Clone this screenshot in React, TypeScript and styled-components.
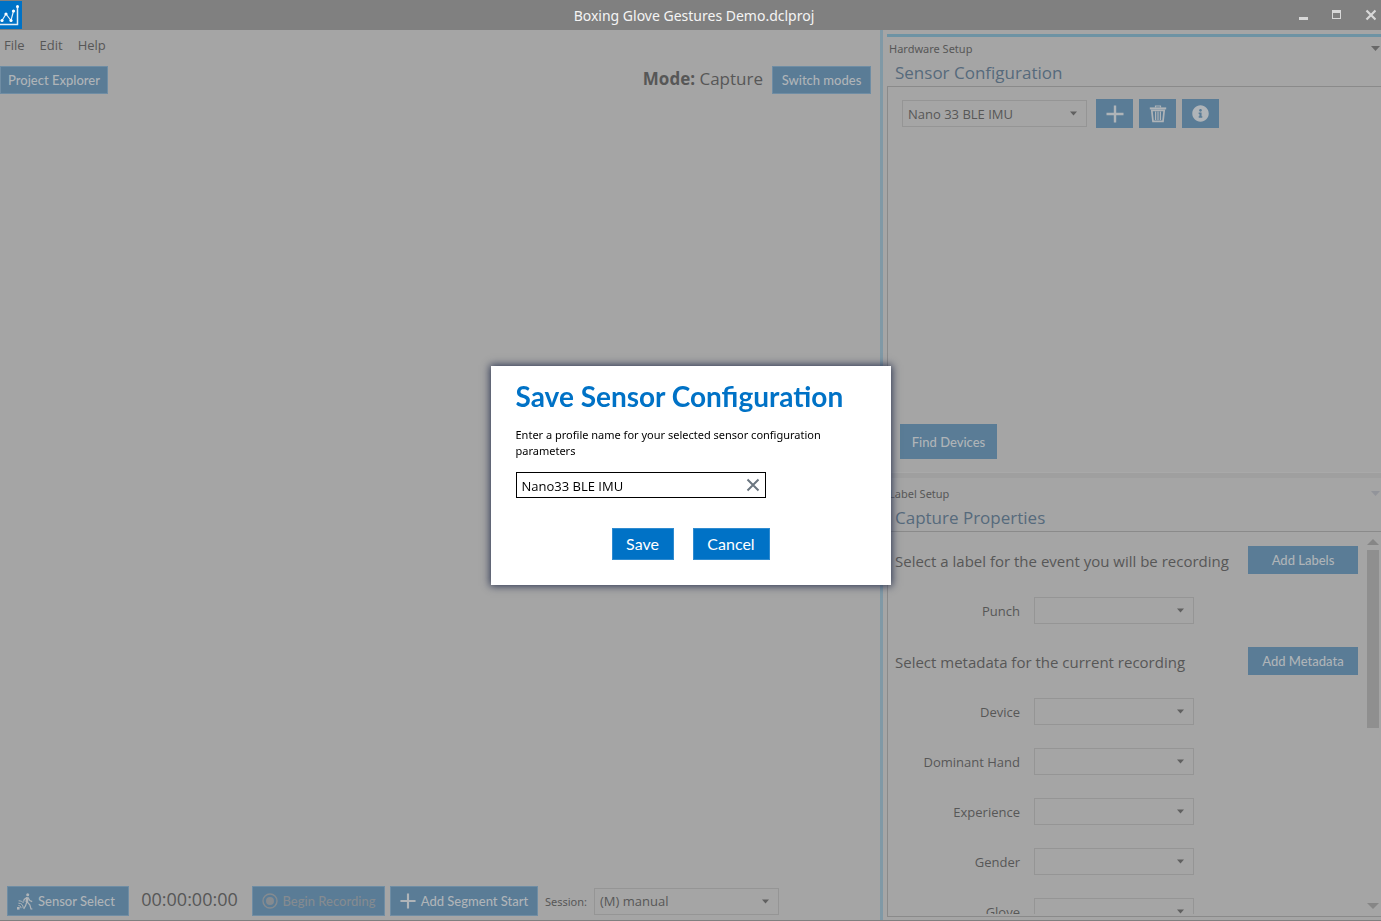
import React, { useState } from "react";
import styled, { createGlobalStyle, css } from "styled-components";
import { FaInfoCircle } from "react-icons/fa";

const color = {
  page: "#a5a5a5",
  titleBar: "#808080",
  button: "#5a7c96",
  buttonEdge: "#6f8da4",
  buttonText: "#afb4b8",
  text: "#575757",
  heading: "#566a7c",
  line: "#8a8a8a",
  field: "#959595",
  accent: "#0072c6",
};

const ui = `"Open Sans", "Noto Sans", sans-serif`;
const wide = `"Noto Sans", "Open Sans", sans-serif`;
const label = `Lato, "Open Sans", sans-serif`;

const GlobalStyle = createGlobalStyle`
  *, *::before, *::after { box-sizing: border-box; }
  body { margin: 0; background: ${color.page}; color: ${color.text}; font-family: ${ui}; font-size: 13px; }
  button, input, select { font: inherit; color: inherit; margin: 0; }
  h1, h2, h3, p { margin: 0; font-weight: 400; }
  svg { flex: none; }
`;

const Window = styled.div`
  display: flex;
  flex-direction: column;
  height: 100vh;
  min-height: 640px;
  overflow: hidden;
  border-bottom: 1px solid #7f7f7f;
`;

const TitleBar = styled.header`
  display: grid;
  grid-template-columns: 1fr auto 1fr;
  align-items: center;
  flex: none;
  height: 30px;
  padding-right: 5px;
  background: ${color.titleBar};
`;

const Logo = styled.svg`
  display: block;
`;

const WindowTitle = styled.h1`
  padding: 2px 0 0 12px;
  font-family: ${wide};
  font-size: 14px;
  line-height: 20px;
  color: #f4f4f4;
`;

const WindowControls = styled.div`
  display: flex;
  justify-content: flex-end;
  gap: 20px;
`;

const IconButton = styled.button`
  display: flex;
  align-items: center;
  justify-content: center;
  flex: none;
  padding: 0;
  border: 0;
  background: none;
`;

const Workspace = styled.div`
  display: grid;
  grid-template-columns: minmax(0, 1fr) 3px 498px;
  flex: 1;
  min-height: 0;
`;

const Main = styled.main`
  display: flex;
  flex-direction: column;
  min-width: 0;
`;

const Splitter = styled.div`
  background: #8099a6;
`;

const MenuBar = styled.nav`
  display: flex;
  gap: 15px;
  padding: 5px 4px;
`;

const MenuItem = styled.a`
  font-size: 13px;
  line-height: 20px;
  color: inherit;
  text-decoration: none;
`;

const Toolbar = styled.div`
  display: flex;
  align-items: center;
  gap: 9px;
  padding: 6px 9px 0 0;
`;

const ModeText = styled.div`
  margin-left: auto;
  padding-bottom: 2px;
  font-size: 17px;
  line-height: 24px;
`;

const Button = styled.button<{ $height?: number; $width?: number }>`
  display: inline-flex;
  align-items: center;
  justify-content: center;
  flex: none;
  gap: 5px;
  height: ${(p) => p.$height ?? 28}px;
  ${(p) => p.$width && css`width: ${p.$width}px;`}
  padding: 0 4px;
  border: 1px solid ${color.buttonEdge};
  background: ${color.button};
  color: ${color.buttonText};
  font-family: ${label};
  font-size: 13px;
  font-weight: 500;
  white-space: nowrap;

  &:disabled { color: #858b90; }
`;

const SensorButton = styled(Button)`
  justify-content: flex-start;
  gap: 4px;
  padding-left: 9px;
`;

const FlatButton = styled(Button)`
  border-color: ${color.button};
`;

const SquareButton = styled(FlatButton)`
  padding: 0;
`;

const RecordBar = styled.div`
  display: flex;
  align-items: center;
  margin-top: auto;
  padding: 0 0 4px 7px;
`;

const RecordActions = styled.div`
  display: flex;
  gap: 5px;
`;

const Timer = styled.output`
  width: 123px;
  padding: 0 2px 4px 0;
  text-align: center;
  font-size: 18px;
  line-height: 24px;
`;

const SessionLabel = styled.label`
  padding: 0 7px;
  font-family: ${wide};
  font-size: 11px;
`;

const SelectBox = styled.span<{ $width: number }>`
  position: relative;
  display: block;
  flex: none;
  width: ${(p) => p.$width}px;
  height: 27px;
`;

const NativeSelect = styled.select`
  appearance: none;
  display: block;
  width: 100%;
  height: 100%;
  padding: 0 24px 0 5px;
  border: 1px solid ${color.field};
  border-radius: 0;
  background: transparent;
`;

const Caret = styled.svg`
  position: absolute;
  top: 11px;
  right: 10px;
  pointer-events: none;
`;

const Side = styled.aside`
  display: grid;
  grid-template-rows: minmax(0, 1fr) 6px minmax(0, 1fr);
  min-width: 0;
  min-height: 0;
  padding-left: 4px;
`;

const Panel = styled.section<{ $active?: boolean }>`
  display: flex;
  flex-direction: column;
  min-height: 0;
  padding-top: 4px;

  &::before {
    content: "";
    display: ${(p) => (p.$active ? "block" : "none")};
    flex: none;
    height: 3px;
    background: #6d93a4;
  }
`;

const PanelDivider = styled.div`
  border-top: 1px solid #a9a9a9;
  background: #9f9f9f;
`;

const PanelHeader = styled.header`
  display: flex;
  align-items: center;
  justify-content: space-between;
  flex: none;
  height: 24px;
  padding: 0 1px 1px 2px;
  font-family: ${wide};
  font-size: 11px;
`;

const PanelTitle = styled.h2`
  flex: none;
  height: 25px;
  padding-left: 8px;
  font-size: 17px;
  line-height: 24px;
  color: ${color.heading};
`;

const PanelBox = styled.div`
  display: flex;
  flex: 1;
  min-height: 0;
  border-top: 1px solid ${color.line};
  border-left: 1px solid ${color.line};
`;

const DevicesBox = styled(PanelBox)`
  flex-direction: column;
  align-items: flex-start;
  justify-content: space-between;
  padding: 12px 12px 13px;
`;

const ConfigRow = styled.div`
  display: flex;
  align-items: center;
  gap: 6px;
  padding-left: 2px;

  > :first-child { margin-right: 3px; }
`;

const PropertiesBox = styled(PanelBox)`
  border-bottom: 1px solid ${color.line};
  margin-bottom: 3px;
  padding-bottom: 2px;
`;

const Properties = styled.div`
  flex: 1;
  min-width: 0;
  overflow: hidden;
  padding: 14px 9px 0 7px;
`;

const Group = styled.section`
  margin-bottom: 12px;
`;

const GroupHeader = styled.div`
  display: flex;
  align-items: center;
  justify-content: space-between;
  height: 28px;
  margin-bottom: 11px;
`;

const GroupTitle = styled.h3`
  padding-top: 2px;
  font-size: 15px;
  line-height: 20px;
  white-space: nowrap;
`;

const Field = styled.div`
  display: grid;
  grid-template-columns: 125px 160px;
  column-gap: 14px;
  height: 50px;
  padding-top: 12px;
  line-height: 28px;
  text-align: right;
`;

const ScrollTrack = styled.div`
  display: flex;
  flex-direction: column;
  align-items: center;
  flex: none;
  width: 12px;
  margin-right: 2px;
  padding: 7px 0 5px;
`;

const ScrollThumb = styled.div`
  width: 100%;
  height: 48%;
  margin: 5px 0 auto;
  background: #8f8f8f;
`;

const DialogLayer = styled.div`
  position: fixed;
  inset: 30px 0 0 0;
  display: flex;
  align-items: center;
  justify-content: center;
`;

const Dialog = styled.form`
  width: 400px;
  padding: 13px 25px 25px;
  background: #fff;
  color: #000;
  box-shadow: 0 0 8px 1px #2b3450;
`;

const DialogTitle = styled.h2`
  font-family: ${label};
  font-size: 28px;
  font-weight: 700;
  line-height: 34px;
  white-space: nowrap;
  color: ${color.accent};
`;

const DialogText = styled.label`
  display: block;
  margin: 14px 0 13px;
  font-family: ${wide};
  font-size: 11px;
  line-height: 16px;
`;

const NameField = styled.div`
  display: flex;
  align-items: center;
  width: 250px;
  height: 26px;
  padding-right: 5px;
  border: 1px solid #000;
`;

const NameInput = styled.input`
  flex: 1;
  min-width: 0;
  padding: 1px 5px 0;
  border: 0;
  outline: 0;
  background: none;
  font-size: 13px;
`;

const DialogActions = styled.div`
  display: flex;
  justify-content: center;
  gap: 19px;
  margin-top: 30px;
`;

const PrimaryButton = styled.button<{ $width: number }>`
  width: ${(p) => p.$width}px;
  height: 32px;
  padding: 0 0 2px;
  border: 1px solid #2f8bd0;
  background: ${color.accent};
  color: #fff;
  font-family: ${label};
  font-size: 16px;
`;

const Triangle = ({ up, w = 12, h = 6, fill = "#868686" }: { up?: boolean; w?: number; h?: number; fill?: string }) => (
  <svg width={w} height={h} viewBox="0 0 12 6" preserveAspectRatio="none" aria-hidden="true">
    <path d={up ? "M0 6 6 0l6 6z" : "M0 0h12L6 6z"} fill={fill} />
  </svg>
);

const PlusIcon = ({ thin }: { thin?: boolean }) => (
  <svg width={thin ? 16 : 18} height={thin ? 16 : 18} viewBox="0 0 18 18" aria-hidden="true">
    <path d="M9 .5v17M.5 9h17" stroke="currentColor" strokeWidth="2.4" />
  </svg>
);

const TrashIcon = () => (
  <svg width="18" height="18" viewBox="0 0 18 18" fill="none" stroke="currentColor" aria-hidden="true">
    <path d="M6.5 2.5V1h5v1.5" strokeWidth="1.2" />
    <path d="M.8 3.4h16.4" strokeWidth="2" />
    <path d="M2.8 5.4 4 16.4h10l1.2-11z" strokeWidth="1.7" />
    <path d="M6.6 6.5v8.5M9 6.5v8.5M11.4 6.5v8.5" strokeWidth="1.2" />
  </svg>
);

const WalkIcon = () => (
  <svg width="17" height="17" viewBox="0 0 17 17" fill="none" stroke="currentColor" aria-hidden="true">
    <circle cx="10.7" cy="1.8" r="1.5" fill="currentColor" stroke="none" />
    <path d="M10.4 4.2 9.8 9.2" strokeWidth="2.6" />
    <path d="M9.8 4.6 7.2 6.4 6.6 8.6M11.2 4.8l1.6 2.8 2.4 1M9.7 9l-1 3.4-2 3.6M10.2 9l2.6 2.8 1.2 4.2h1.4" strokeWidth="1.2" />
    <path d="M1.4 12.6c1.8 0 2.6.9 2.6 2.6M1.4 10.2c3.2 0 4.8 1.8 4.8 4.8M1.6 7.8c2.2 0 4 .8 5 2.2" strokeWidth="1" />
    <path d="M0 14h2.6v2.6H0z" fill="currentColor" stroke="none" />
  </svg>
);

const RecordIcon = () => (
  <svg width="16" height="16" viewBox="0 0 16 16" aria-hidden="true">
    <circle cx="8" cy="8" r="7" fill="none" stroke="currentColor" strokeWidth="1.4" />
    <circle cx="8" cy="8" r="4" fill="currentColor" />
  </svg>
);

interface DropdownProps {
  id: string;
  width: number;
  value?: string;
  "aria-label"?: string;
}

const Dropdown = ({ id, width, value = "", ...rest }: DropdownProps) => (
  <SelectBox $width={width}>
    <NativeSelect id={id} defaultValue={value} {...rest}>
      <option value={value}>{value}</option>
    </NativeSelect>
    <Caret width="7" height="5" viewBox="0 0 7 5" aria-hidden="true">
      <path d="M0 .5h7L3.5 4.5z" fill="#606060" />
    </Caret>
  </SelectBox>
);

const PropertyField = ({ name }: { name: string }) => {
  const id = name.toLowerCase().replace(/\s+/g, "-");
  return (
    <Field>
      <label htmlFor={id}>{name}</label>
      <Dropdown id={id} width={160} />
    </Field>
  );
};

const metadata = ["Device", "Dominant Hand", "Experience", "Gender", "Glove"];

export default function App() {
  const [profile, setProfile] = useState("Nano33 BLE IMU");

  return (
    <>
      <GlobalStyle />
      <Window>
        <TitleBar>
          <Logo width="22" height="28" viewBox="0 0 22 28" aria-hidden="true">
            <path d="M0 0h22v28H0z" fill={color.accent} />
            <g stroke="#e4eef7" fill="none" strokeWidth="1.2">
              <path d="m2 19.5 4-6.5 5 6.5 2.5-9.5" />
              <path d="M0 23.5h17.500V6" strokeWidth="1.5" />
            </g>
            <g fill="#fff">
              <circle cx="2" cy="19.5" r="1.6" />
              <circle cx="6" cy="13" r="1.6" />
              <circle cx="11" cy="19.5" r="1.6" />
              <circle cx="13.5" cy="10" r="1.6" />
              <circle cx="17.5" cy="5.5" r="1.5" />
            </g>
          </Logo>
          <WindowTitle>Boxing Glove Gestures Demo.dclproj</WindowTitle>
          <WindowControls>
            <IconButton type="button" aria-label="Minimize">
              <svg width="15" height="12" viewBox="0 0 15 12"><path d="M3 8h9v3H3z" fill="#d8d8d8" /></svg>
            </IconButton>
            <IconButton type="button" aria-label="Maximize">
              <svg width="11" height="12" viewBox="0 0 11 12"><path d="M1 1h9v9H1zM2 4v5h7V4z" fill="#d8d8d8" fillRule="evenodd" /></svg>
            </IconButton>
            <IconButton type="button" aria-label="Close">
              <svg width="14" height="12" viewBox="0 0 14 12"><path d="m4.5 1.500 9 9m0-9-9 9" stroke="#d8d8d8" strokeWidth="2.2" /></svg>
            </IconButton>
          </WindowControls>
        </TitleBar>

        <Workspace>
          <Main>
            <MenuBar>
              <MenuItem href="#file">File</MenuItem>
              <MenuItem href="#edit">Edit</MenuItem>
              <MenuItem href="#help">Help</MenuItem>
            </MenuBar>
            <Toolbar>
              <Button type="button" $width={108}>Project Explorer</Button>
              <ModeText><strong>Mode:</strong> Capture</ModeText>
              <Button type="button" $width={99}>Switch modes</Button>
            </Toolbar>
            <RecordBar>
              <SensorButton type="button" $height={30} $width={122}><WalkIcon />Sensor Select</SensorButton>
              <Timer>00:00:00:00</Timer>
              <RecordActions>
                <Button type="button" $height={30} $width={133} disabled><RecordIcon />Begin Recording</Button>
                <Button type="button" $height={30} $width={148}><PlusIcon thin />Add Segment Start</Button>
              </RecordActions>
              <SessionLabel htmlFor="session">Session:</SessionLabel>
              <Dropdown id="session" width={185} value="(M) manual" />
            </RecordBar>
          </Main>

          <Splitter />

          <Side>
            <Panel $active>
              <PanelHeader>
                Hardware Setup
                <IconButton type="button" aria-label="Hardware Setup options"><Triangle w={9} h={5} fill="#686868" /></IconButton>
              </PanelHeader>
              <PanelTitle>Sensor Configuration</PanelTitle>
              <DevicesBox>
                <ConfigRow>
                  <Dropdown id="sensor" width={185} value="Nano 33 BLE IMU" aria-label="Sensor configuration" />
                  <SquareButton type="button" $height={29} $width={37} aria-label="Add"><PlusIcon /></SquareButton>
                  <SquareButton type="button" $height={29} $width={37} aria-label="Delete"><TrashIcon /></SquareButton>
                  <SquareButton type="button" $height={29} $width={37} aria-label="Info"><FaInfoCircle size={17} /></SquareButton>
                </ConfigRow>
                <FlatButton type="button" $height={35} $width={97}>Find Devices</FlatButton>
              </DevicesBox>
            </Panel>

            <PanelDivider />

            <Panel>
              <PanelHeader>
                Label Setup
                <IconButton type="button" aria-label="Label Setup options"><Triangle w={9} h={5} fill="#92949a" /></IconButton>
              </PanelHeader>
              <PanelTitle>Capture Properties</PanelTitle>
              <PropertiesBox>
                <Properties>
                  <Group>
                    <GroupHeader>
                      <GroupTitle>Select a label for the event you will be recording</GroupTitle>
                      <FlatButton type="button" $width={110}>Add Labels</FlatButton>
                    </GroupHeader>
                    <PropertyField name="Punch" />
                  </Group>
                  <Group>
                    <GroupHeader>
                      <GroupTitle>Select metadata for the current recording</GroupTitle>
                      <FlatButton type="button" $width={110}>Add Metadata</FlatButton>
                    </GroupHeader>
                    {metadata.map((name) => <PropertyField key={name} name={name} />)}
                  </Group>
                </Properties>
                <ScrollTrack aria-hidden="true">
                  <Triangle up />
                  <ScrollThumb />
                  <Triangle />
                </ScrollTrack>
              </PropertiesBox>
            </Panel>
          </Side>
        </Workspace>
      </Window>

      <DialogLayer>
        <Dialog role="dialog" aria-modal="true" aria-labelledby="dialog-title" onSubmit={(e) => e.preventDefault()}>
          <DialogTitle id="dialog-title">Save Sensor Configuration</DialogTitle>
          <DialogText htmlFor="profile">
            Enter a profile name for your selected sensor configuration parameters
          </DialogText>
          <NameField>
            <NameInput id="profile" value={profile} onChange={(e) => setProfile(e.target.value)} />
            <IconButton type="button" aria-label="Clear" onClick={() => setProfile("")}>
              <svg width="14" height="14" viewBox="0 0 14 14"><path d="m1.5 1.500 11 11m0-11-11 11" stroke="#6b7680" strokeWidth="2" /></svg>
            </IconButton>
          </NameField>
          <DialogActions>
            <PrimaryButton type="submit" $width={62}>Save</PrimaryButton>
            <PrimaryButton type="button" $width={77}>Cancel</PrimaryButton>
          </DialogActions>
        </Dialog>
      </DialogLayer>
    </>
  );
}
